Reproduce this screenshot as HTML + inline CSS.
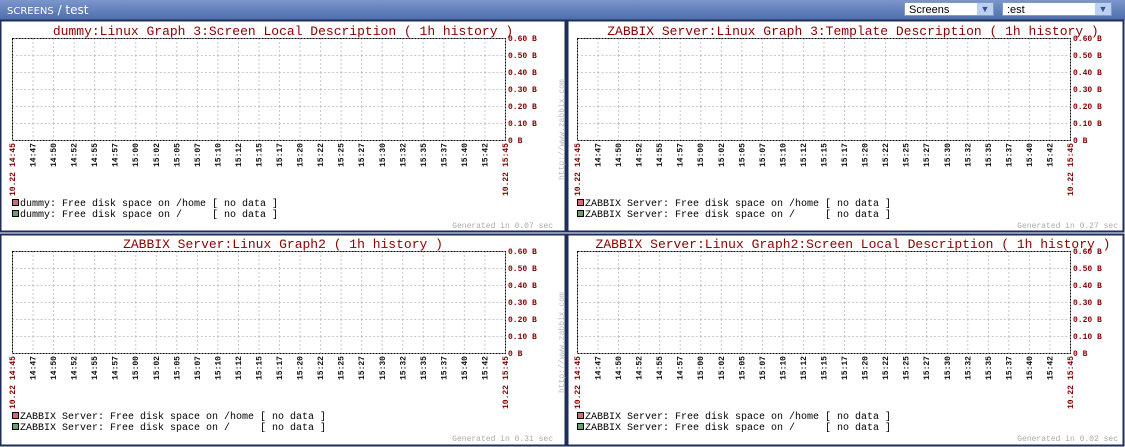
<!DOCTYPE html>
<html><head><meta charset="utf-8"><style>
body{margin:0;width:1125px;height:447px;overflow:hidden;background:#fff;font-family:"Liberation Mono",monospace}
.hdr{position:absolute;left:0;top:0;width:1125px;height:20px;background:linear-gradient(#7b96cc,#4d6cab);}
.hdr .t{position:absolute;left:7px;top:3px;color:#fff;font-family:"DejaVu Sans","Liberation Sans",sans-serif;font-size:12px}
.hdr .t small{font-size:10px}
.sel{position:absolute;top:2px;height:14px;background:#fff;border:1px solid #7f9db9;font-family:"Liberation Sans",sans-serif;font-size:11px;line-height:14px;padding-left:4px;box-sizing:border-box}
.sel b{position:absolute;right:0;top:0;width:16px;height:12px;background:#bcd0f4;color:#35528f;font-size:9px;text-align:center;line-height:12px}
svg{position:absolute;left:0;top:0}
.tl{font-size:8px;fill:#111;font-weight:bold}
.rl{font-size:8px;fill:#800000;font-weight:bold}
.ti{font-size:13px;fill:#8b0000}
.lg{font-size:10px;fill:#000}
.gn{font-size:8px;fill:#aaa}
.ur{font-size:8px;fill:#bbb}
</style></head><body>
<div class="hdr"><div class="t"><small>SCREENS</small> / test</div>
<div class="sel" style="left:904px;width:90px">Screens<b>▼</b></div>
<div class="sel" style="left:1002px;width:110px">:est<b>▼</b></div></div>
<svg width="1125" height="447" viewBox="0 0 1125 447">
<defs>
<pattern id="g" x="12" y="18" width="20.54" height="17" patternUnits="userSpaceOnUse">
<path d="M0.5 0V17M0 0.5H20.54" stroke="#c8c8c8" stroke-dasharray="2,2" fill="none"/>
</pattern>
<g id="grid">
<rect x="12" y="18" width="493" height="102" fill="url(#g)"/>
<rect x="12.5" y="18.5" width="493" height="102" fill="none" stroke="#000" stroke-dasharray="2,1"/>
</g>
</defs>
<rect x="0.5" y="20.5" width="565" height="211" fill="none" stroke="#1c2e5e" stroke-width="2"/>
<rect x="567.5" y="20.5" width="556" height="211" fill="none" stroke="#1c2e5e" stroke-width="2"/>
<rect x="0.5" y="234.5" width="565" height="211" fill="none" stroke="#1c2e5e" stroke-width="2"/>
<rect x="567.5" y="234.5" width="556" height="211" fill="none" stroke="#1c2e5e" stroke-width="2"/>

<g transform="translate(0,20)">
<use href="#grid"/>
<text class="ti" x="283" y="15" text-anchor="middle">dummy:Linux Graph 3:Screen Local Description ( 1h history )</text>
<g class="rl"><text x="508" y="21">0.60 B</text><text x="508" y="38">0.50 B</text><text x="508" y="55">0.40 B</text><text x="508" y="72">0.30 B</text><text x="508" y="89">0.20 B</text><text x="508" y="106">0.10 B</text><text x="508" y="123">0 B</text></g>
<g class="tl" text-anchor="end">
<text class="rl" transform="translate(15,123) rotate(-90)">14:45</text><text transform="translate(35.5,123) rotate(-90)">14:47</text><text transform="translate(56,123) rotate(-90)">14:50</text><text transform="translate(76.6,123) rotate(-90)">14:52</text><text transform="translate(97.2,123) rotate(-90)">14:55</text><text transform="translate(117.7,123) rotate(-90)">14:57</text><text transform="translate(138.2,123) rotate(-90)">15:00</text><text transform="translate(158.8,123) rotate(-90)">15:02</text><text transform="translate(179.3,123) rotate(-90)">15:05</text><text transform="translate(199.9,123) rotate(-90)">15:07</text><text transform="translate(220.4,123) rotate(-90)">15:10</text><text transform="translate(241,123) rotate(-90)">15:12</text><text transform="translate(261.5,123) rotate(-90)">15:15</text><text transform="translate(282,123) rotate(-90)">15:17</text><text transform="translate(302.6,123) rotate(-90)">15:20</text><text transform="translate(323.1,123) rotate(-90)">15:22</text><text transform="translate(343.7,123) rotate(-90)">15:25</text><text transform="translate(364.2,123) rotate(-90)">15:27</text><text transform="translate(384.8,123) rotate(-90)">15:30</text><text transform="translate(405.3,123) rotate(-90)">15:32</text><text transform="translate(425.8,123) rotate(-90)">15:35</text><text transform="translate(446.4,123) rotate(-90)">15:37</text><text transform="translate(467,123) rotate(-90)">15:40</text><text transform="translate(487.5,123) rotate(-90)">15:42</text><text class="rl" transform="translate(508,123) rotate(-90)">15:45</text>
<text class="rl" transform="translate(15,152) rotate(-90)">10.22</text><text class="rl" transform="translate(508,152) rotate(-90)">10.22</text></g>
<text class="ur" transform="translate(564,160) rotate(-90)">http://www.zabbix.com</text>
<rect x="12.5" y="179.5" width="6" height="6" fill="#d46a73" stroke="#000"/><rect x="12.5" y="190.5" width="6" height="6" fill="#6a9e6a" stroke="#000"/>
<text class="lg" x="20" y="186" xml:space="preserve">dummy: Free disk space on /home [ no data ]</text>
<text class="lg" x="20" y="197" xml:space="preserve">dummy: Free disk space on /     [ no data ]</text>
<text class="gn" x="553" y="208" text-anchor="end">Generated in 0.07 sec</text>
</g>

<g transform="translate(565,20)">
<use href="#grid"/>
<text class="ti" x="288" y="15" text-anchor="middle">ZABBIX Server:Linux Graph 3:Template Description ( 1h history )</text>
<g class="rl"><text x="508" y="21">0.60 B</text><text x="508" y="38">0.50 B</text><text x="508" y="55">0.40 B</text><text x="508" y="72">0.30 B</text><text x="508" y="89">0.20 B</text><text x="508" y="106">0.10 B</text><text x="508" y="123">0 B</text></g>
<g class="tl" text-anchor="end">
<text class="rl" transform="translate(15,123) rotate(-90)">14:45</text><text transform="translate(35.5,123) rotate(-90)">14:47</text><text transform="translate(56,123) rotate(-90)">14:50</text><text transform="translate(76.6,123) rotate(-90)">14:52</text><text transform="translate(97.2,123) rotate(-90)">14:55</text><text transform="translate(117.7,123) rotate(-90)">14:57</text><text transform="translate(138.2,123) rotate(-90)">15:00</text><text transform="translate(158.8,123) rotate(-90)">15:02</text><text transform="translate(179.3,123) rotate(-90)">15:05</text><text transform="translate(199.9,123) rotate(-90)">15:07</text><text transform="translate(220.4,123) rotate(-90)">15:10</text><text transform="translate(241,123) rotate(-90)">15:12</text><text transform="translate(261.5,123) rotate(-90)">15:15</text><text transform="translate(282,123) rotate(-90)">15:17</text><text transform="translate(302.6,123) rotate(-90)">15:20</text><text transform="translate(323.1,123) rotate(-90)">15:22</text><text transform="translate(343.7,123) rotate(-90)">15:25</text><text transform="translate(364.2,123) rotate(-90)">15:27</text><text transform="translate(384.8,123) rotate(-90)">15:30</text><text transform="translate(405.3,123) rotate(-90)">15:32</text><text transform="translate(425.8,123) rotate(-90)">15:35</text><text transform="translate(446.4,123) rotate(-90)">15:37</text><text transform="translate(467,123) rotate(-90)">15:40</text><text transform="translate(487.5,123) rotate(-90)">15:42</text><text class="rl" transform="translate(508,123) rotate(-90)">15:45</text>
<text class="rl" transform="translate(15,152) rotate(-90)">10.22</text><text class="rl" transform="translate(508,152) rotate(-90)">10.22</text></g>
<rect x="12.5" y="179.5" width="6" height="6" fill="#d46a73" stroke="#000"/><rect x="12.5" y="190.5" width="6" height="6" fill="#6a9e6a" stroke="#000"/>
<text class="lg" x="20" y="186" xml:space="preserve">ZABBIX Server: Free disk space on /home [ no data ]</text>
<text class="lg" x="20" y="197" xml:space="preserve">ZABBIX Server: Free disk space on /     [ no data ]</text>
<text class="gn" x="553" y="208" text-anchor="end">Generated in 0.27 sec</text>
</g>

<g transform="translate(0,233)">
<use href="#grid"/>
<text class="ti" x="283" y="15" text-anchor="middle">ZABBIX Server:Linux Graph2 ( 1h history )</text>
<g class="rl"><text x="508" y="21">0.60 B</text><text x="508" y="38">0.50 B</text><text x="508" y="55">0.40 B</text><text x="508" y="72">0.30 B</text><text x="508" y="89">0.20 B</text><text x="508" y="106">0.10 B</text><text x="508" y="123">0 B</text></g>
<g class="tl" text-anchor="end">
<text class="rl" transform="translate(15,123) rotate(-90)">14:45</text><text transform="translate(35.5,123) rotate(-90)">14:47</text><text transform="translate(56,123) rotate(-90)">14:50</text><text transform="translate(76.6,123) rotate(-90)">14:52</text><text transform="translate(97.2,123) rotate(-90)">14:55</text><text transform="translate(117.7,123) rotate(-90)">14:57</text><text transform="translate(138.2,123) rotate(-90)">15:00</text><text transform="translate(158.8,123) rotate(-90)">15:02</text><text transform="translate(179.3,123) rotate(-90)">15:05</text><text transform="translate(199.9,123) rotate(-90)">15:07</text><text transform="translate(220.4,123) rotate(-90)">15:10</text><text transform="translate(241,123) rotate(-90)">15:12</text><text transform="translate(261.5,123) rotate(-90)">15:15</text><text transform="translate(282,123) rotate(-90)">15:17</text><text transform="translate(302.6,123) rotate(-90)">15:20</text><text transform="translate(323.1,123) rotate(-90)">15:22</text><text transform="translate(343.7,123) rotate(-90)">15:25</text><text transform="translate(364.2,123) rotate(-90)">15:27</text><text transform="translate(384.8,123) rotate(-90)">15:30</text><text transform="translate(405.3,123) rotate(-90)">15:32</text><text transform="translate(425.8,123) rotate(-90)">15:35</text><text transform="translate(446.4,123) rotate(-90)">15:37</text><text transform="translate(467,123) rotate(-90)">15:40</text><text transform="translate(487.5,123) rotate(-90)">15:42</text><text class="rl" transform="translate(508,123) rotate(-90)">15:45</text>
<text class="rl" transform="translate(15,152) rotate(-90)">10.22</text><text class="rl" transform="translate(508,152) rotate(-90)">10.22</text></g>
<text class="ur" transform="translate(564,160) rotate(-90)">http://www.zabbix.com</text>
<rect x="12.5" y="179.5" width="6" height="6" fill="#d46a73" stroke="#000"/><rect x="12.5" y="190.5" width="6" height="6" fill="#6a9e6a" stroke="#000"/>
<text class="lg" x="20" y="186" xml:space="preserve">ZABBIX Server: Free disk space on /home [ no data ]</text>
<text class="lg" x="20" y="197" xml:space="preserve">ZABBIX Server: Free disk space on /     [ no data ]</text>
<text class="gn" x="553" y="208" text-anchor="end">Generated in 0.31 sec</text>
</g>

<g transform="translate(565,233)">
<use href="#grid"/>
<text class="ti" x="288" y="15" text-anchor="middle">ZABBIX Server:Linux Graph2:Screen Local Description ( 1h history )</text>
<g class="rl"><text x="508" y="21">0.60 B</text><text x="508" y="38">0.50 B</text><text x="508" y="55">0.40 B</text><text x="508" y="72">0.30 B</text><text x="508" y="89">0.20 B</text><text x="508" y="106">0.10 B</text><text x="508" y="123">0 B</text></g>
<g class="tl" text-anchor="end">
<text class="rl" transform="translate(15,123) rotate(-90)">14:45</text><text transform="translate(35.5,123) rotate(-90)">14:47</text><text transform="translate(56,123) rotate(-90)">14:50</text><text transform="translate(76.6,123) rotate(-90)">14:52</text><text transform="translate(97.2,123) rotate(-90)">14:55</text><text transform="translate(117.7,123) rotate(-90)">14:57</text><text transform="translate(138.2,123) rotate(-90)">15:00</text><text transform="translate(158.8,123) rotate(-90)">15:02</text><text transform="translate(179.3,123) rotate(-90)">15:05</text><text transform="translate(199.9,123) rotate(-90)">15:07</text><text transform="translate(220.4,123) rotate(-90)">15:10</text><text transform="translate(241,123) rotate(-90)">15:12</text><text transform="translate(261.5,123) rotate(-90)">15:15</text><text transform="translate(282,123) rotate(-90)">15:17</text><text transform="translate(302.6,123) rotate(-90)">15:20</text><text transform="translate(323.1,123) rotate(-90)">15:22</text><text transform="translate(343.7,123) rotate(-90)">15:25</text><text transform="translate(364.2,123) rotate(-90)">15:27</text><text transform="translate(384.8,123) rotate(-90)">15:30</text><text transform="translate(405.3,123) rotate(-90)">15:32</text><text transform="translate(425.8,123) rotate(-90)">15:35</text><text transform="translate(446.4,123) rotate(-90)">15:37</text><text transform="translate(467,123) rotate(-90)">15:40</text><text transform="translate(487.5,123) rotate(-90)">15:42</text><text class="rl" transform="translate(508,123) rotate(-90)">15:45</text>
<text class="rl" transform="translate(15,152) rotate(-90)">10.22</text><text class="rl" transform="translate(508,152) rotate(-90)">10.22</text></g>
<rect x="12.5" y="179.5" width="6" height="6" fill="#d46a73" stroke="#000"/><rect x="12.5" y="190.5" width="6" height="6" fill="#6a9e6a" stroke="#000"/>
<text class="lg" x="20" y="186" xml:space="preserve">ZABBIX Server: Free disk space on /home [ no data ]</text>
<text class="lg" x="20" y="197" xml:space="preserve">ZABBIX Server: Free disk space on /     [ no data ]</text>
<text class="gn" x="553" y="208" text-anchor="end">Generated in 0.02 sec</text>
</g>
</svg>
</body></html>
